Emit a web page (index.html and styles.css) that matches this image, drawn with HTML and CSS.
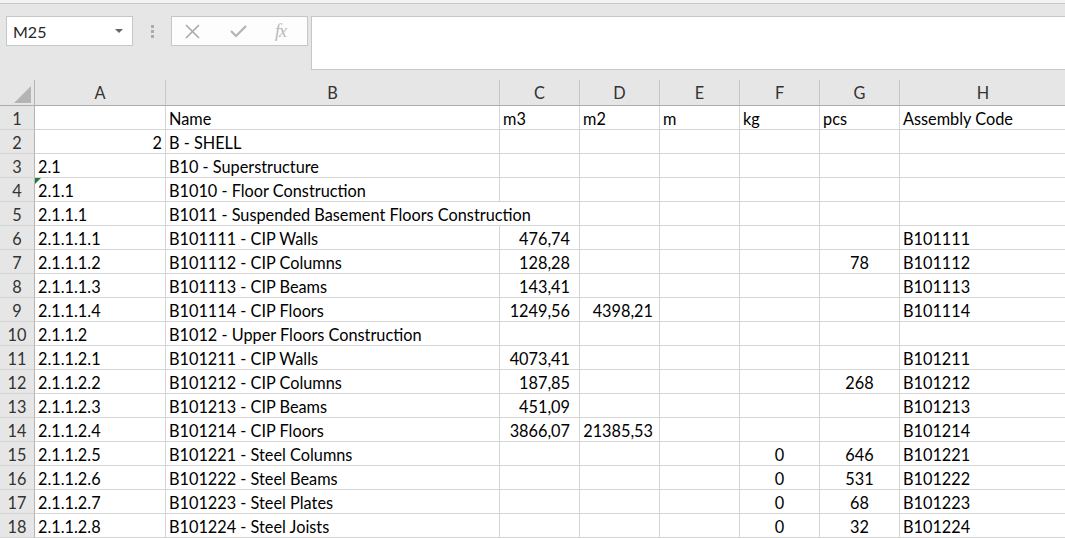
FILE: index.html
```html
<!DOCTYPE html>
<html>
<head>
<meta charset="utf-8">
<link rel="stylesheet" href="styles.css">
</head>
<body>
<div class="app">
  <div class="topstrip"></div>
  <div class="toolbar">
    <div class="namebox"><span class="nb-text">M25</span><span class="nb-arrow"></span></div>
    <div class="grip"><span></span><span></span><span></span></div>
    <div class="fbtns">
      <svg class="ic icx" width="15" height="15" viewBox="0 0 15 15"><path d="M1 1 L14 14 M14 1 L1 14" stroke="#a9a9a9" stroke-width="1.6" fill="none"/></svg>
      <svg class="ic icv" width="17" height="14" viewBox="0 0 17 14"><path d="M1 7 L6 12 L16 2" stroke="#b3b3b3" stroke-width="2.2" fill="none"/></svg>
      <span class="fx">fx</span>
    </div>
    <div class="finput"></div>
  </div>
  <div class="sheet" id="sheet">
    <div class="corner"><span class="tri"></span></div>
    <div class="ch">A</div><div class="ch">B</div><div class="ch">C</div><div class="ch">D</div><div class="ch">E</div><div class="ch">F</div><div class="ch">G</div><div class="ch last">H</div>

    <div class="rh">1</div><div class="c"></div><div class="c">Name</div><div class="c">m3</div><div class="c">m2</div><div class="c">m</div><div class="c">kg</div><div class="c">pcs</div><div class="c">Assembly Code</div>

    <div class="rh">2</div><div class="c r">2</div><div class="c">B - SHELL</div><div class="c"></div><div class="c"></div><div class="c"></div><div class="c"></div><div class="c"></div><div class="c"></div>

    <div class="rh">3</div><div class="c">2.1</div><div class="c">B10 - Superstructure</div><div class="c"></div><div class="c"></div><div class="c"></div><div class="c"></div><div class="c"></div><div class="c"></div>

    <div class="rh">4</div><div class="c flag">2.1.1</div><div class="c">B1010 - Floor Construction</div><div class="c"></div><div class="c"></div><div class="c"></div><div class="c"></div><div class="c"></div><div class="c"></div>

    <div class="rh">5</div><div class="c">2.1.1.1</div><div class="c spill">B1011 - Suspended Basement Floors Construction</div><div class="c"></div><div class="c"></div><div class="c"></div><div class="c"></div><div class="c"></div><div class="c"></div>

    <div class="rh">6</div><div class="c">2.1.1.1.1</div><div class="c">B101111 - CIP Walls</div><div class="c nc">476,74</div><div class="c"></div><div class="c"></div><div class="c"></div><div class="c"></div><div class="c">B101111</div>

    <div class="rh">7</div><div class="c">2.1.1.1.2</div><div class="c">B101112 - CIP Columns</div><div class="c nc">128,28</div><div class="c"></div><div class="c"></div><div class="c"></div><div class="c ctr">78</div><div class="c">B101112</div>

    <div class="rh">8</div><div class="c">2.1.1.1.3</div><div class="c">B101113 - CIP Beams</div><div class="c nc">143,41</div><div class="c"></div><div class="c"></div><div class="c"></div><div class="c"></div><div class="c">B101113</div>

    <div class="rh">9</div><div class="c">2.1.1.1.4</div><div class="c">B101114 - CIP Floors</div><div class="c nc">1249,56</div><div class="c nd">4398,21</div><div class="c"></div><div class="c"></div><div class="c"></div><div class="c">B101114</div>

    <div class="rh">10</div><div class="c">2.1.1.2</div><div class="c">B1012 - Upper Floors Construction</div><div class="c"></div><div class="c"></div><div class="c"></div><div class="c"></div><div class="c"></div><div class="c"></div>

    <div class="rh">11</div><div class="c">2.1.1.2.1</div><div class="c">B101211 - CIP Walls</div><div class="c nc">4073,41</div><div class="c"></div><div class="c"></div><div class="c"></div><div class="c"></div><div class="c">B101211</div>

    <div class="rh">12</div><div class="c">2.1.1.2.2</div><div class="c">B101212 - CIP Columns</div><div class="c nc">187,85</div><div class="c"></div><div class="c"></div><div class="c"></div><div class="c ctr">268</div><div class="c">B101212</div>

    <div class="rh">13</div><div class="c">2.1.1.2.3</div><div class="c">B101213 - CIP Beams</div><div class="c nc">451,09</div><div class="c"></div><div class="c"></div><div class="c"></div><div class="c"></div><div class="c">B101213</div>

    <div class="rh">14</div><div class="c">2.1.1.2.4</div><div class="c">B101214 - CIP Floors</div><div class="c nc">3866,07</div><div class="c nd">21385,53</div><div class="c"></div><div class="c"></div><div class="c"></div><div class="c">B101214</div>

    <div class="rh">15</div><div class="c">2.1.1.2.5</div><div class="c">B101221 - Steel Columns</div><div class="c"></div><div class="c"></div><div class="c"></div><div class="c ctr">0</div><div class="c ctr">646</div><div class="c">B101221</div>

    <div class="rh">16</div><div class="c">2.1.1.2.6</div><div class="c">B101222 - Steel Beams</div><div class="c"></div><div class="c"></div><div class="c"></div><div class="c ctr">0</div><div class="c ctr">531</div><div class="c">B101222</div>

    <div class="rh">17</div><div class="c">2.1.1.2.7</div><div class="c">B101223 - Steel Plates</div><div class="c"></div><div class="c"></div><div class="c"></div><div class="c ctr">0</div><div class="c ctr">68</div><div class="c">B101223</div>

    <div class="rh">18</div><div class="c">2.1.1.2.8</div><div class="c">B101224 - Steel Joists</div><div class="c"></div><div class="c"></div><div class="c"></div><div class="c ctr">0</div><div class="c ctr">32</div><div class="c">B101224</div>
  </div>
</div>
</body>
</html>
```

FILE: styles.css
```css
html, body {
  margin: 0;
  padding: 0;
  overflow: hidden;
  background: #ffffff;
}
.app {
  width: 1065px;
  height: 538px;
  overflow: hidden;
  font-family: "Lato", "Open Sans", sans-serif;
  background: #e6e6e6;
}
.topstrip {
  height: 3px;
  background: #f3f3f3;
  border-bottom: 1px solid #c8c8c8;
}
.toolbar {
  display: flex;
  align-items: flex-start;
  padding: 12px 0 0 6px;
  height: 64px;
  box-sizing: border-box;
}
.namebox {
  width: 127px;
  height: 30px;
  box-sizing: border-box;
  background: #ffffff;
  border: 1px solid #c6c6c6;
  display: flex;
  align-items: center;
  justify-content: space-between;
  padding: 0 9px 0 6px;
}
.nb-text {
  font-size: 16px;
  color: #262626;
}
.nb-arrow {
  width: 0;
  height: 0;
  border-left: 4px solid transparent;
  border-right: 4px solid transparent;
  border-top: 4px solid #666666;
}
.grip {
  width: 38px;
  height: 30px;
  display: flex;
  flex-direction: column;
  align-items: center;
  justify-content: center;
  gap: 2px;
}
.grip span {
  width: 3px;
  height: 3px;
  background: #ababab;
}
.fbtns {
  width: 137px;
  height: 30px;
  box-sizing: border-box;
  background: #fdfdfd;
  border: 1px solid #c6c6c6;
  display: flex;
  align-items: center;
  padding: 0 0 0 13px;
}
.icv {
  margin-left: 30px;
}
.fx {
  margin-left: 28px;
  font-family: "Liberation Serif", serif;
  font-style: italic;
  font-size: 18px;
  color: #b8b8b8;
  letter-spacing: -1px;
}
.finput {
  margin-left: 3px;
  flex: 1;
  height: 54px;
  box-sizing: border-box;
  background: #ffffff;
  border: 1px solid #c6c6c6;
  border-right: none;
}
.sheet {
  margin-top: 12px;
  display: grid;
  grid-template-columns: 35px 131px 334px 80px 80px 80px 80px 80px 166px;
  grid-template-rows: 26px;
  grid-auto-rows: 24px;
  background: #ffffff;
  font-size: 16.3px;
  color: #000000;
}
.corner {
  background: #e6e6e6;
  border-right: 1px solid #b4b4b4;
  border-bottom: 1px solid #ababab;
  box-sizing: border-box;
  position: relative;
}
.tri {
  position: absolute;
  left: 14px;
  top: 6px;
  width: 0;
  height: 0;
  border-left: 17px solid transparent;
  border-bottom: 17px solid #b4b4b4;
}
.ch {
  background: #e6e6e6;
  border-right: 1px solid #c6c6c6;
  border-bottom: 1px solid #ababab;
  box-sizing: border-box;
  text-align: center;
  line-height: 26px;
  color: #333333;
}
.ch.last {
  border-right: none;
}
.rh {
  background: #e6e6e6;
  border-right: 1px solid #b4b4b4;
  border-bottom: 1px solid #d4d4d4;
  box-sizing: border-box;
  text-align: center;
  padding-top: 2px;
  line-height: 22px;
  color: #333333;
}
.c {
  border-right: 1px solid #d4d4d4;
  border-bottom: 1px solid #d4d4d4;
  box-sizing: border-box;
  padding: 2px 3px 0 3px;
  line-height: 22px;
  white-space: nowrap;
  overflow: hidden;
  position: relative;
}
.c.r {
  text-align: right;
}
.c.ctr {
  text-align: center;
}
.c.nc {
  text-align: right;
  padding-right: 9px;
}
.c.nd {
  text-align: right;
  padding-right: 6px;
}
.c.spill {
  overflow: visible;
  border-right-color: transparent;
}
.c.flag::before {
  content: "";
  position: absolute;
  left: 0;
  top: 0;
  width: 0;
  height: 0;
  border-top: 6px solid #1f7a3e;
  border-right: 6px solid transparent;
}
```
